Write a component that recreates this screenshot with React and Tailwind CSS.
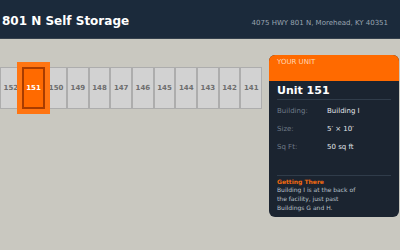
const UNITS = [152, 151, 150, 149, 148, 147, 146, 145, 144, 143, 142, 141]
const SELECTED = 151

const DETAILS = [
  { label: 'Building:', value: 'Building I' },
  { label: 'Size:', value: '5\u2032 \u00d7 10\u2032' },
  { label: 'Sq Ft:', value: '50 sq ft' },
]

export default function App() {
  return (
    <div className="h-[250px] w-[400px] overflow-hidden bg-[#c9c8c0] font-['DejaVu_Sans',sans-serif]">
      <header className="flex h-[39px] items-baseline justify-between border-b border-[#34404c] bg-[#1b2a3b] pl-[2px] pr-[12px] pt-[15px]">
        <h1 className="text-[12px] font-bold leading-none text-white">801 N Self Storage</h1>
        <span className="text-[7px] leading-none text-[#9aa5b1]">4075 HWY 801 N, Morehead, KY 40351</span>
      </header>

      <main className="flex items-start justify-between pt-[16px] pr-[1px]">
        <div className="mt-[12px] flex w-[262px]">
          {UNITS.map((n) =>
            n === SELECTED ? (
              <div
                key={n}
                className="relative z-10 flex h-[42px] flex-1 items-center justify-center border-2 border-[#a83c00] bg-[#ff6a00] text-[7px] font-bold text-white shadow-[0_0_0_5px_#ff7512]"
              >
                {n}
              </div>
            ) : (
              <div
                key={n}
                className="flex h-[42px] flex-1 items-center justify-center border border-[#adadad] bg-[#d2d2d2] text-[7px] font-bold text-[#6e6e6e]"
              >
                {n}
              </div>
            )
          )}
        </div>

        <aside className="w-[130px] overflow-hidden rounded-[6px] bg-[#1b2430]">
          <div className="h-[26px] bg-[#ff6a00] px-[8px] pt-[3px] text-[7px] leading-[8px] text-[#ffd6b3]">
            YOUR UNIT
          </div>
          <div className="px-[8px] pb-[5px]">
            <div className="pt-[3px] text-[11px] font-bold leading-[13px] text-white">Unit 151</div>
            <div className="mt-[2px] border-t border-[#303c4a]" />
            <div className="mt-[7px] flex flex-col gap-[10px]">
              {DETAILS.map((d) => (
                <div key={d.label} className="flex text-[7px] leading-[8px]">
                  <span className="w-[50px] text-[#6f7b88]">{d.label}</span>
                  <span className="text-[#e2e6ea]">{d.value}</span>
                </div>
              ))}
            </div>
            <div className="mt-[24px] border-t border-[#303c4a]" />
            <div className="mt-[2px] text-[6px] font-bold leading-[8px] text-[#f26a0f]">Getting There</div>
            <p className="max-w-[84px] text-[6px] leading-[8.8px] text-[#b9c1ca]">
              Building I is at the back of the facility, just past Buildings G and H.
            </p>
          </div>
        </aside>
      </main>
    </div>
  )
}
